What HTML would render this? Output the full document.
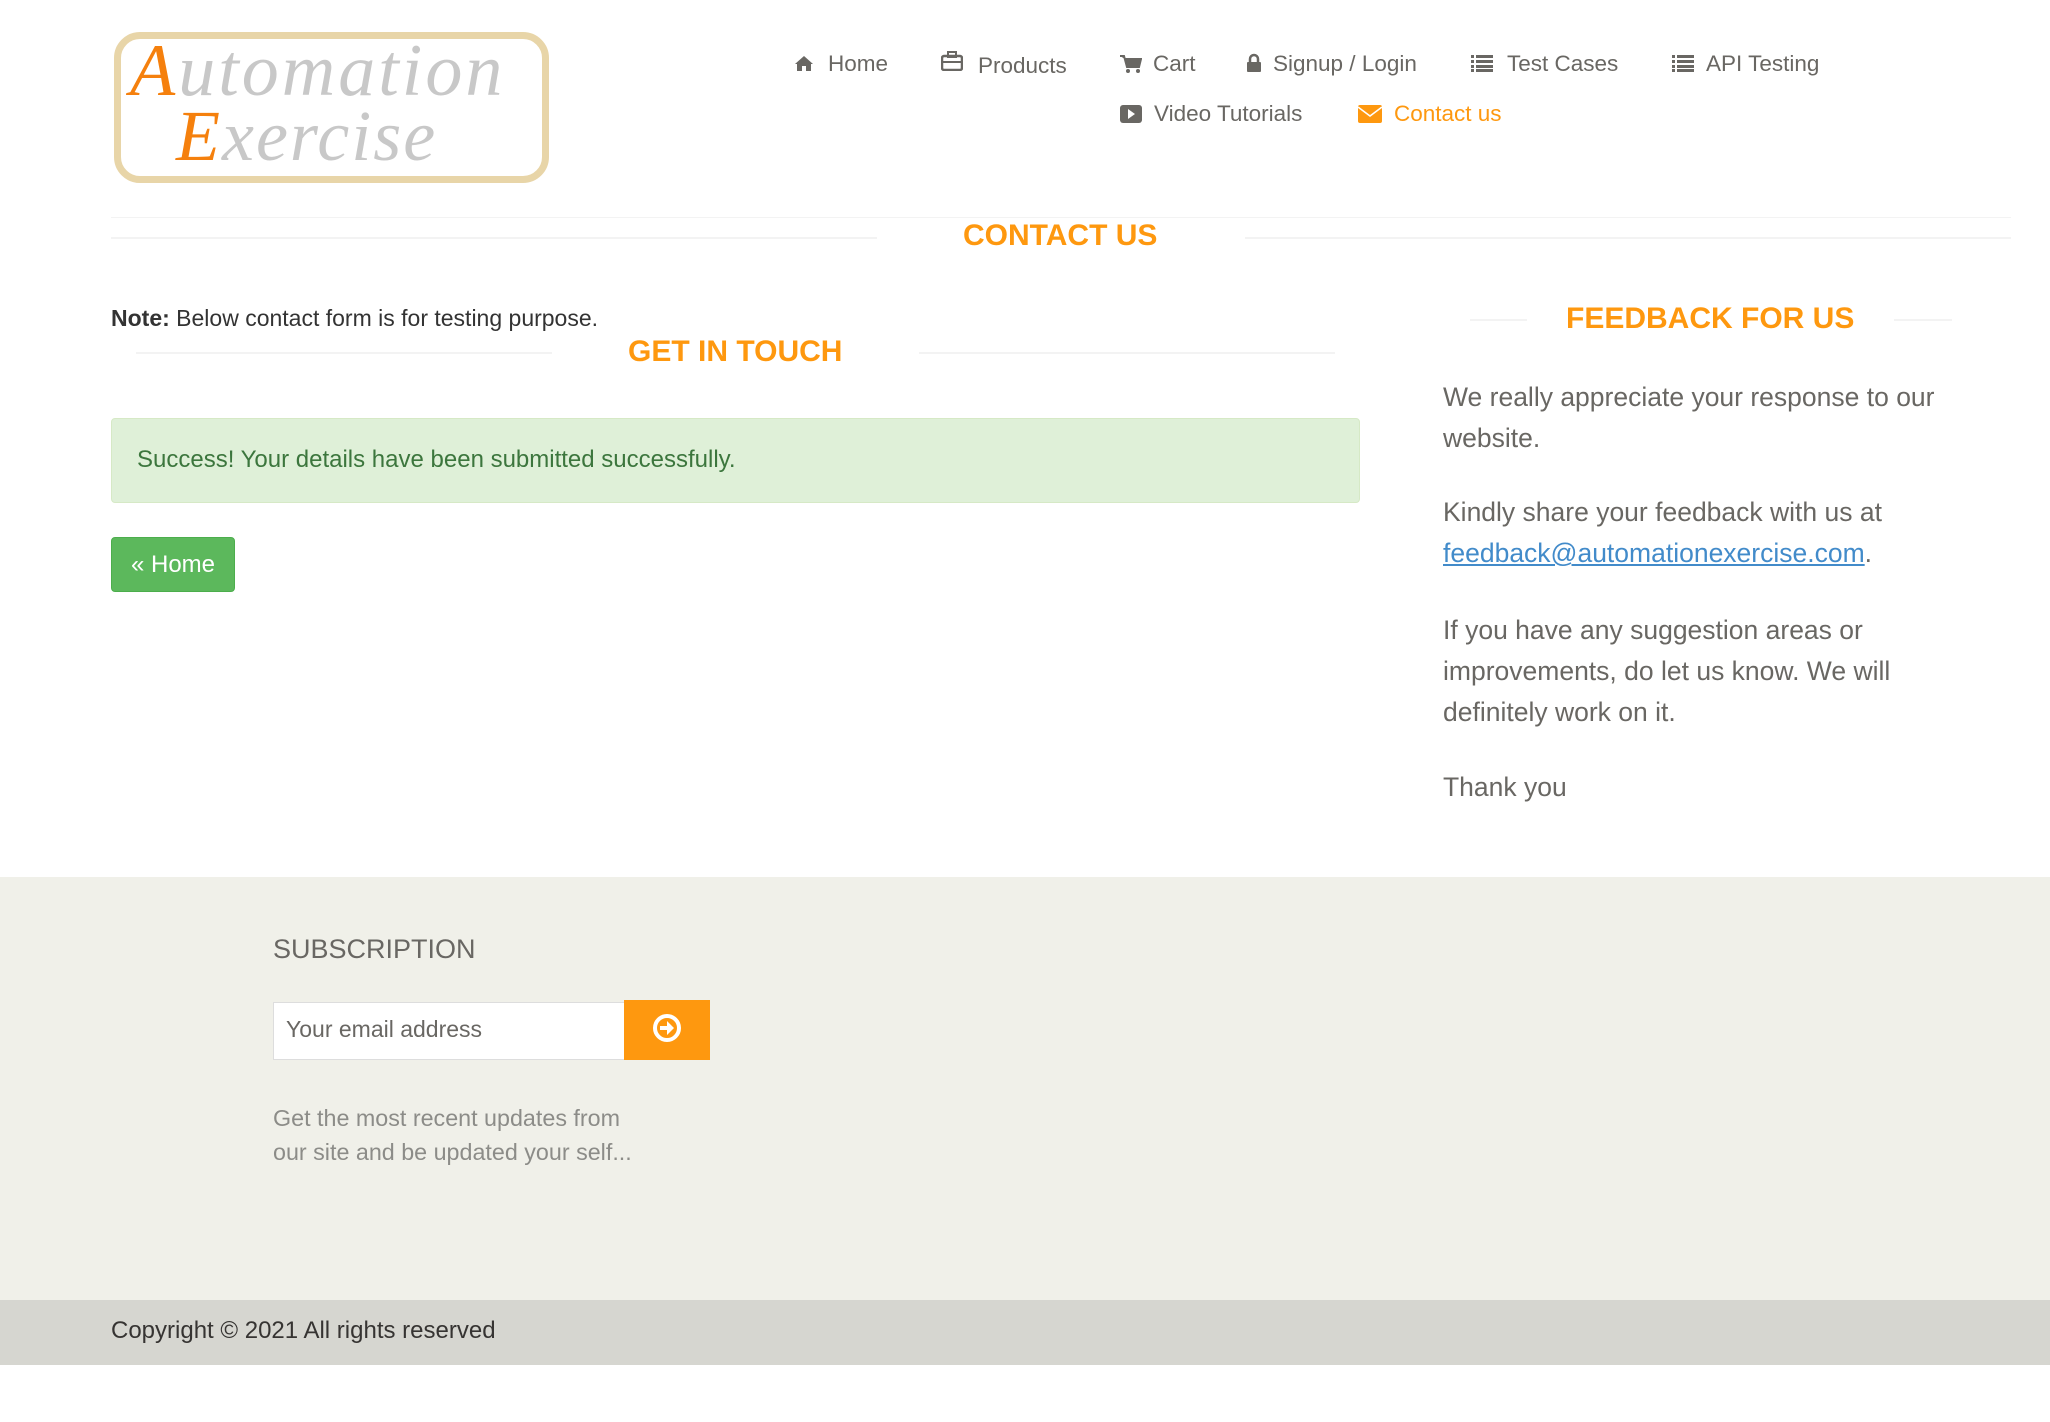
<!DOCTYPE html>
<html><head><meta charset="utf-8"><style>
*{margin:0;padding:0;box-sizing:border-box}
body{width:2050px;height:1422px;background:#fff;font-family:"Liberation Sans",Arial,sans-serif;position:relative;overflow:hidden;color:#696763}
.a{position:absolute;white-space:nowrap}
.nav{font-size:22.5px;color:#696763;line-height:26px}
.nav svg{position:absolute}
.h{font-weight:bold;color:#FE980F;font-size:30px;line-height:32px}
.ln{position:absolute;height:2px;background:#f3f3f3}
.p{font-size:26.5px;line-height:41px;color:#696763}
</style></head><body>
<div class="a" style="left:114px;top:32px;width:435px;height:151px;border:7px solid #e8d5a8;border-radius:26px;background:#fff"></div>
<div class="a" style="left:130px;top:34px;font-family:'Liberation Serif',serif;font-style:italic;font-size:74px;line-height:74px;color:#c8c8c8;letter-spacing:3px"><span style="color:#f5800d">A</span>utomation</div>
<div class="a" style="left:176px;top:100px;font-family:'Liberation Serif',serif;font-style:italic;font-size:72px;line-height:72px;color:#c8c8c8;letter-spacing:2px"><span style="color:#f5800d">E</span>xercise</div>

<div class="nav">
<svg style="left:794px;top:55px" width="20" height="17" viewBox="0 0 20 17"><path d="M10 1 L1 9 L3 9 L3 16 L8 16 L8 11 L12 11 L12 16 L17 16 L17 9 L19 9 Z" fill="#696763"/></svg>
<div class="a" style="left:828px;top:51px">Home</div>
<svg style="left:941px;top:50px" width="22" height="21" viewBox="0 0 22 21"><rect x="1" y="6" width="20" height="14" rx="2" fill="none" stroke="#696763" stroke-width="2.5"/><rect x="7" y="2" width="8" height="5" fill="none" stroke="#696763" stroke-width="2"/><line x1="1" y1="12" x2="21" y2="12" stroke="#696763" stroke-width="2"/></svg>
<div class="a" style="left:978px;top:53px">Products</div>
<svg style="left:1120px;top:55px" width="22" height="19" viewBox="0 0 22 19"><path d="M0 1 H4 L7 12 H19 L21 4 H5" fill="#696763" stroke="#696763" stroke-width="2"/><circle cx="8" cy="16" r="2" fill="#696763"/><circle cx="18" cy="16" r="2" fill="#696763"/></svg>
<div class="a" style="left:1153px;top:51px">Cart</div>
<svg style="left:1246px;top:53px" width="16" height="20" viewBox="0 0 16 20"><path d="M4 9 V6 a4 4 0 0 1 8 0 V9" fill="none" stroke="#696763" stroke-width="2.5"/><rect x="1" y="9" width="14" height="10" rx="1" fill="#696763"/></svg>
<div class="a" style="left:1273px;top:51px">Signup / Login</div>
<svg style="left:1471px;top:54px" width="22" height="18" viewBox="0 0 22 18"><g fill="#696763"><rect x="0" y="1" width="3" height="3"/><rect x="5" y="1" width="17" height="3"/><rect x="0" y="6" width="3" height="3"/><rect x="5" y="6" width="17" height="3"/><rect x="0" y="11" width="3" height="3"/><rect x="5" y="11" width="17" height="3"/><rect x="0" y="15" width="3" height="3"/><rect x="5" y="15" width="17" height="3"/></g></svg>
<div class="a" style="left:1507px;top:51px">Test Cases</div>
<svg style="left:1672px;top:54px" width="22" height="18" viewBox="0 0 22 18"><g fill="#696763"><rect x="0" y="1" width="3" height="3"/><rect x="5" y="1" width="17" height="3"/><rect x="0" y="6" width="3" height="3"/><rect x="5" y="6" width="17" height="3"/><rect x="0" y="11" width="3" height="3"/><rect x="5" y="11" width="17" height="3"/><rect x="0" y="15" width="3" height="3"/><rect x="5" y="15" width="17" height="3"/></g></svg>
<div class="a" style="left:1706px;top:51px">API Testing</div>
<svg style="left:1120px;top:105px" width="22" height="18" viewBox="0 0 22 18"><rect x="0" y="0" width="22" height="18" rx="3" fill="#696763"/><path d="M8 4 L15 9 L8 14 Z" fill="#fff"/></svg>
<div class="a" style="left:1154px;top:101px">Video Tutorials</div>
<svg style="left:1358px;top:105px" width="24" height="18" viewBox="0 0 24 18"><rect x="0" y="0" width="24" height="18" rx="2" fill="#FE980F"/><path d="M0 2 L12 11 L24 2" fill="none" stroke="#fff" stroke-width="1.5"/></svg>
<div class="a" style="left:1394px;top:101px;color:#FE980F">Contact us</div>
</div>

<div class="ln" style="left:111px;top:217px;width:1900px;height:1px;background:#f3f3f3"></div>
<div class="ln" style="left:111px;top:237px;width:766px"></div>
<div class="ln" style="left:1245px;top:237px;width:766px"></div>
<div class="a h" style="left:963px;top:220px">CONTACT US</div>

<div class="a" style="left:111px;top:305px;font-size:23px;color:#333"><b>Note:</b> Below contact form is for testing purpose.</div>
<div class="ln" style="left:136px;top:352px;width:416px"></div>
<div class="ln" style="left:919px;top:352px;width:416px"></div>
<div class="a h" style="left:628px;top:336px">GET IN TOUCH</div>

<div class="a" style="left:111px;top:418px;width:1249px;height:85px;background:#dff0d8;border:1px solid #d6e9c6;border-radius:4px"></div>
<div class="a" style="left:137px;top:446px;font-size:24px;color:#3c763d">Success! Your details have been submitted successfully.</div>

<div class="a" style="left:111px;top:537px;width:124px;height:55px;background:#5cb85c;border:1px solid #4cae4c;border-radius:4px;color:#fff;font-size:24px;line-height:53px;text-align:center">« Home</div>

<div class="ln" style="left:1470px;top:319px;width:57px"></div>
<div class="ln" style="left:1894px;top:319px;width:58px"></div>
<div class="a h" style="left:1566px;top:303px">FEEDBACK FOR US</div>
<div class="a p" style="left:1443px;top:377px">We really appreciate your response to our<br>website.</div>
<div class="a p" style="left:1443px;top:492px">Kindly share your feedback with us at<br><span style="color:#428bca;text-decoration:underline">feedback@automationexercise.com</span>.</div>
<div class="a p" style="left:1443px;top:610px">If you have any suggestion areas or<br>improvements, do let us know. We will<br>definitely work on it.</div>
<div class="a p" style="left:1443px;top:767px">Thank you</div>

<div class="a" style="left:0;top:877px;width:2050px;height:423px;background:#f0f0e9"></div>
<div class="a" style="left:273px;top:934px;font-size:27px;color:#696763">SUBSCRIPTION</div>
<div class="a" style="left:273px;top:1002px;width:352px;height:58px;background:#fff;border:1px solid #ddd"></div>
<div class="a" style="left:286px;top:1016px;font-size:23px;color:#696763">Your email address</div>
<div class="a" style="left:624px;top:1000px;width:86px;height:60px;background:#FE980F"></div>
<svg class="a" style="left:652px;top:1013px" width="30" height="30" viewBox="0 0 30 30"><circle cx="15" cy="15" r="12" fill="none" stroke="#fff" stroke-width="4"/><path d="M8 13 H15 V8 L22 15 L15 22 V17 H8 Z" fill="#fff"/></svg>
<div class="a" style="left:273px;top:1101px;font-size:23.3px;line-height:34px;color:#8c8c88">Get the most recent updates from<br>our site and be updated your self...</div>

<div class="a" style="left:0;top:1300px;width:2050px;height:65px;background:#d6d6d0"></div>
<div class="a" style="left:111px;top:1317px;font-size:24px;color:#363432">Copyright © 2021 All rights reserved</div>
</body></html>
